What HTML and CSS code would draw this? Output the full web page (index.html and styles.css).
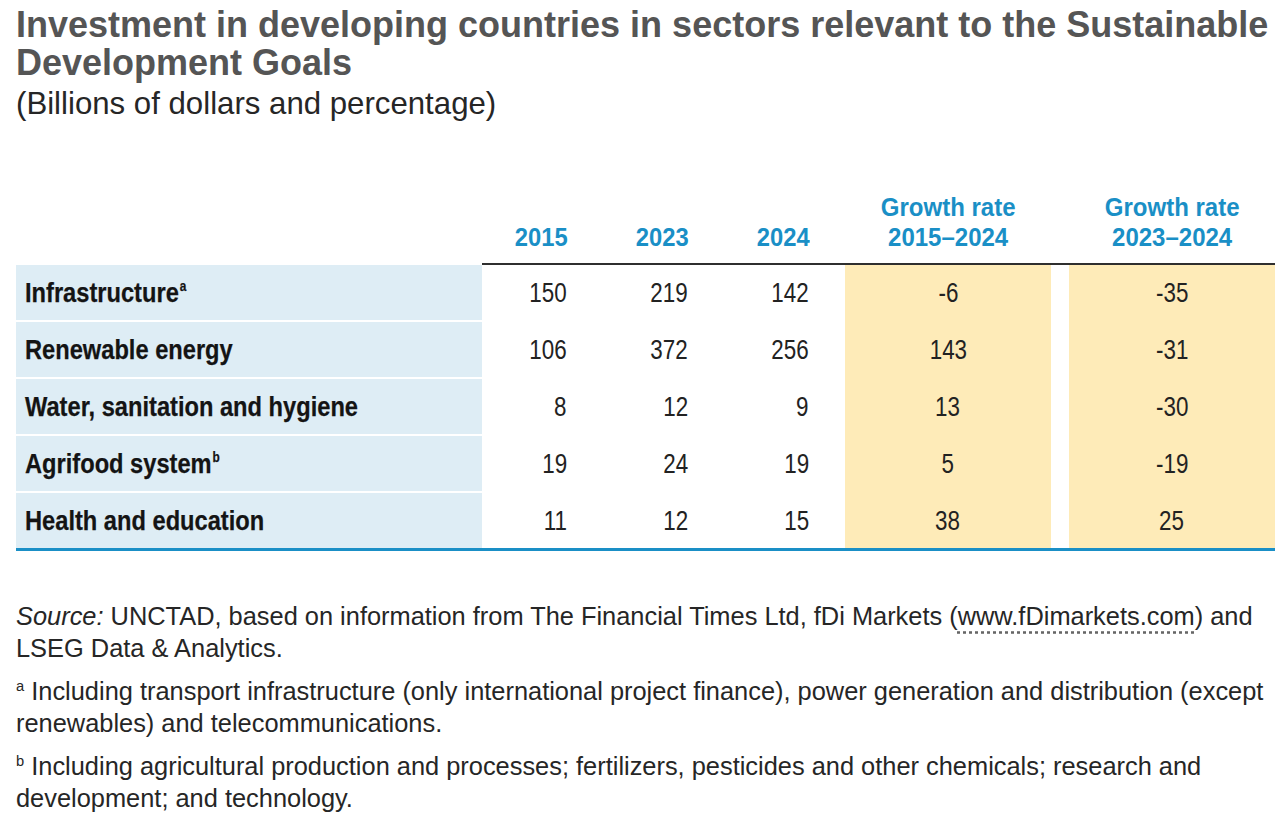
FILE: index.html
```html
<!DOCTYPE html>
<html lang="en">
<head>
<meta charset="utf-8">
<title>Investment in developing countries in SDG sectors</title>
<link rel="stylesheet" href="styles.css">
</head>
<body>
<header class="heading">
  <h1 class="title">Investment in developing countries in sectors relevant to the Sustainable Development Goals</h1>
  <p class="subtitle">(Billions of dollars and percentage)</p>
</header>

<section class="table">
  <div class="row head">
    <div class="cell num"><span class="txt">2015</span></div>
    <div class="cell num"><span class="txt">2023</span></div>
    <div class="cell num"><span class="txt">2024</span></div>
    <div class="cell growth"><span class="txt">Growth rate<br>2015–2024</span></div>
    <div class="cell spacer"></div>
    <div class="cell growth"><span class="txt">Growth rate<br>2023–2024</span></div>
  </div>

  <div class="row body">
    <div class="cell label"><span class="txt">Infrastructure<sup>a</sup></span></div>
    <div class="cell num"><span class="txt">150</span></div>
    <div class="cell num"><span class="txt">219</span></div>
    <div class="cell num"><span class="txt">142</span></div>
    <div class="cell growth"><span class="txt">-6</span></div>
    <div class="cell spacer"></div>
    <div class="cell growth"><span class="txt">-35</span></div>
  </div>
  <div class="row body">
    <div class="cell label"><span class="txt">Renewable energy</span></div>
    <div class="cell num"><span class="txt">106</span></div>
    <div class="cell num"><span class="txt">372</span></div>
    <div class="cell num"><span class="txt">256</span></div>
    <div class="cell growth"><span class="txt">143</span></div>
    <div class="cell spacer"></div>
    <div class="cell growth"><span class="txt">-31</span></div>
  </div>
  <div class="row body">
    <div class="cell label"><span class="txt">Water, sanitation and hygiene</span></div>
    <div class="cell num"><span class="txt">8</span></div>
    <div class="cell num"><span class="txt">12</span></div>
    <div class="cell num"><span class="txt">9</span></div>
    <div class="cell growth"><span class="txt">13</span></div>
    <div class="cell spacer"></div>
    <div class="cell growth"><span class="txt">-30</span></div>
  </div>
  <div class="row body">
    <div class="cell label"><span class="txt">Agrifood system<sup>b</sup></span></div>
    <div class="cell num"><span class="txt">19</span></div>
    <div class="cell num"><span class="txt">24</span></div>
    <div class="cell num"><span class="txt">19</span></div>
    <div class="cell growth"><span class="txt">5</span></div>
    <div class="cell spacer"></div>
    <div class="cell growth"><span class="txt">-19</span></div>
  </div>
  <div class="row body last">
    <div class="cell label"><span class="txt">Health and education</span></div>
    <div class="cell num"><span class="txt">11</span></div>
    <div class="cell num"><span class="txt">12</span></div>
    <div class="cell num"><span class="txt">15</span></div>
    <div class="cell growth"><span class="txt">38</span></div>
    <div class="cell spacer"></div>
    <div class="cell growth"><span class="txt">25</span></div>
  </div>
</section>

<footer class="notes">
  <p><em>Source:</em> UNCTAD, based on information from The Financial Times Ltd, fDi Markets (<span class="link">www.fDimarkets.com</span>) and LSEG Data &amp; Analytics.</p>
  <p><sup>a</sup> Including transport infrastructure (only international project finance), power generation and distribution (except renewables) and telecommunications.</p>
  <p><sup>b</sup> Including agricultural production and processes; fertilizers, pesticides and other chemicals; research and development; and technology.</p>
</footer>
</body>
</html>
```

FILE: styles.css
```css
html, body {
  margin: 0;
  padding: 0;
  background: #ffffff;
}

body {
  padding: 6px 13px 0 16px;
  font-family: "Liberation Sans", Arial, sans-serif;
  color: #222;
}

.title {
  margin: 0;
  font-size: 36px;
  line-height: 38px;
  font-weight: 700;
  color: #555555;
}

.subtitle {
  margin: 4px 0 0;
  font-size: 31.2px;
  line-height: 36px;
  color: #262626;
}

.table {
  margin-top: 70px;
}

.row {
  display: grid;
  grid-template-columns: 466px 121px 121px 121px 206px 18px 206px;
}

.txt {
  display: inline-block;
  white-space: nowrap;
}

/* header */
.row.head {
  margin-left: 466px;
  grid-template-columns: 121px 121px 121px 206px 18px 206px;
  border-bottom: 2px solid #2f2f2f;
}

.head .cell {
  align-self: end;
  font-weight: 700;
  font-size: 25px;
  line-height: 30px;
  color: #1a8fc6;
  padding-bottom: 11px;
}

.head .num {
  text-align: right;
  padding-right: 35px;
}

.head .num .txt {
  transform: scaleX(0.95);
  transform-origin: right center;
}

.head .growth {
  text-align: center;
}

.head .growth .txt {
  transform: scaleX(0.96);
  transform-origin: center center;
}

/* body rows */
.body .cell {
  height: 55px;
  display: flex;
  align-items: center;
  font-size: 28px;
  color: #222;
}

.body .label {
  background: #deedf5;
  font-weight: 700;
  font-size: 28.5px;
  color: #141414;
  padding-left: 9px;
  border-bottom: 2px solid #ffffff;
}

.body .label .txt {
  transform: scaleX(0.83);
  transform-origin: left center;
  -webkit-text-stroke: 0.25px #141414;
}

.body .num {
  justify-content: flex-end;
  padding-right: 36px;
  border-bottom: 2px solid transparent;
}

.body .num .txt {
  transform: scaleX(0.8);
  transform-origin: right center;
}

.body .spacer {
  border-bottom: 2px solid transparent;
}

.body .growth {
  justify-content: center;
  background: #feebb8;
  border-bottom: 2px solid #feebb8;
}

.body .growth .txt {
  transform: scaleX(0.8);
  transform-origin: center center;
}

.body.last .cell {
  border-bottom: 3px solid #1a8fc6;
}

.label sup {
  font-size: 0.5em;
  vertical-align: 0.75em;
  line-height: 0;
  margin-left: 1px;
}

/* notes */
.notes {
  margin-top: 49px;
  margin-right: -6px;
  font-size: 25.4px;
  line-height: 32px;
  color: #262626;
}

.notes p {
  margin: 0 0 11px;
}

.notes sup {
  font-size: 0.58em;
  vertical-align: 0.6em;
  line-height: 0;
}

.link {
  text-decoration: underline dotted #666;
  text-underline-offset: 6px;
}
```
